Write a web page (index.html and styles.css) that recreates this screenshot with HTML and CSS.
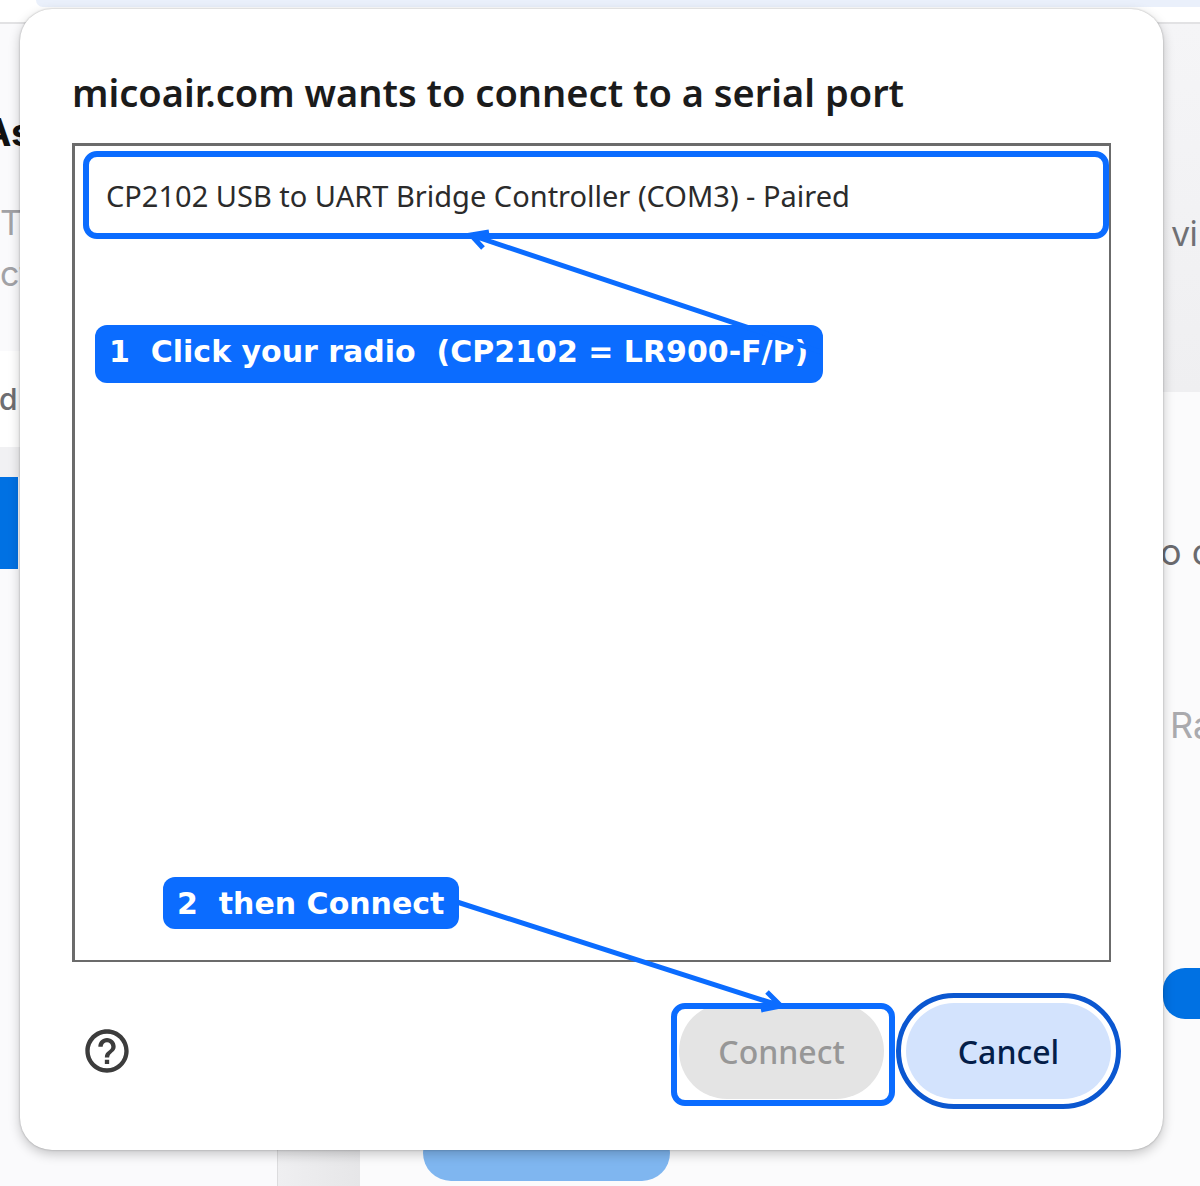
FILE: index.html
```html
<!DOCTYPE html>
<html lang="en">
  <head>
    <meta charset="UTF-8" />
    <meta name="viewport" content="width=device-width, initial-scale=1.0" />
    <title>Connect to a serial port</title>
    <link rel="stylesheet" href="styles.css" />
  </head>
  <body>
    <div class="screen">
      <!-- page behind the dialog -->
      <div class="page">
        <div class="toolbar"></div>
        <div class="columns">
          <div class="sidebar">
            <h2>As</h2>
            <p class="intro">T<br />ct</p>
            <div class="field">d</div>
            <div class="sidebar-button"></div>
          </div>
          <div class="gutter"></div>
          <div class="main">
            <div class="main-top"><p class="via">vi</p></div>
            <p class="to-connect">o c</p>
            <p class="radio">Ra</p>
            <div class="main-button"></div>
            <div class="light-button"></div>
          </div>
        </div>
      </div>

      <div class="dialog" role="dialog" aria-labelledby="title">
        <h1 id="title">micoair.com wants to connect to a serial port</h1>

        <div class="port-list">
          <button class="port" type="button">CP2102 USB to UART Bridge Controller (COM3) - Paired</button>
        </div>

        <div class="actions">
          <button class="help" type="button" aria-label="Help">
            <svg viewBox="0 0 24 24" width="52" height="52">
              <path d="M11 18h2v-2h-2v2zm1-16C6.48 2 2 6.48 2 12s4.48 10 10 10 10-4.48 10-10S17.52 2 12 2zm0 18c-4.41 0-8-3.59-8-8s3.59-8 8-8 8 3.59 8 8-3.59 8-8 8zm0-14c-2.21 0-4 1.79-4 4h2c0-1.1.9-2 2-2s2 .9 2 2c0 2-3 1.75-3 5h2c0-2.25 3-2.5 3-5 0-2.21-1.79-4-4-4z" />
            </svg>
          </button>
          <div class="connect-wrap">
            <button class="btn connect" type="button" disabled>Connect</button>
            <span class="frame"></span>
          </div>
          <button class="btn cancel" type="button">Cancel</button>
        </div>

        <!-- callouts -->
        <div class="callout callout-port">1  Click your radio  (CP2102 = LR900-F/P)</div>
        <div class="callout callout-connect">2  then Connect</div>
        <svg class="arrow arrow-port" viewBox="0 0 364 130" width="364" height="130">
          <path d="M356 123L6 6M24 3L6 6L18 19" />
        </svg>
        <svg class="arrow arrow-connect" viewBox="0 0 340 124" width="340" height="124">
          <path d="M2 5L326 109M312 95L326 109L306 113" />
        </svg>
      </div>
    </div>
  </body>
</html>
```
FILE: styles.css
```css
* {
  box-sizing: border-box;
}
body {
  margin: 0;
  font-family: "Noto Sans", "Open Sans", sans-serif;
  color: #1b1b1b;
}
h1,
h2,
p {
  margin: 0;
}
button {
  font-family: inherit;
  padding: 0;
  border: 0;
}
.screen {
  display: grid;
  min-height: 100vh;
  overflow: hidden;
}
.page,
.dialog {
  grid-area: 1 / 1;
  min-width: 0;
}

/* page behind the dialog */
.page {
  display: flex;
  flex-direction: column;
  font-family: Inter, sans-serif;
  background-color: #fff;
}
.toolbar {
  height: 24px;
  border-bottom: 2px solid #e2e2e4;
}
.toolbar::before {
  content: "";
  display: block;
  height: 7px;
  margin-left: 36px;
  background-color: #eaf0fb;
  border-radius: 0 0 0 20px;
}
.columns {
  display: flex;
  flex: 1;
}
.sidebar {
  width: 278px;
  background-color: #fafafc;
  border-right: 1px solid #dcdcde;
}
.sidebar h2 {
  margin-left: -17px;
  padding-top: 84px;
  font-size: 38px;
  line-height: 48px;
  color: #111;
}
.intro {
  padding: 41px 0 52px;
  font-size: 34px;
  line-height: 51px;
  color: #a2a2a6;
}
.field {
  margin-left: -1px;
  background-color: #fff;
  border-bottom: 30px solid #f1f1f3;
  font-size: 30px;
  font-weight: 500;
  line-height: 96px;
  color: #6e6e72;
}
.sidebar-button {
  width: 18px;
  height: 92px;
  background-color: #0071e3;
}
.gutter {
  width: 82px;
  background: linear-gradient(to right, #efeff1, #e6e6e8);
}
.main {
  display: flex;
  flex-direction: column;
  flex: 1;
  background-color: #fbfbfc;
  font-size: 36px;
  line-height: 48px;
}
.main-top {
  height: 368px;
  padding-top: 185px;
  background: linear-gradient(#f5f5f7, #efeff1);
}
.main p {
  align-self: flex-end;
  width: 40px;
  white-space: nowrap;
}
.main .via {
  margin-left: auto;
  width: 28px;
  font-family: "Noto Sans", sans-serif;
  font-size: 34px;
  color: #707074;
}
.main .to-connect {
  margin-top: 136px;
  color: #6a6a6e;
}
.main .radio {
  width: 30px;
  margin-top: 125px;
  color: #aaaaae;
}
.main-button {
  align-self: flex-end;
  width: 37px;
  height: 51px;
  margin-top: 219px;
  background-color: #0071e3;
  border-radius: 22px 0 0 22px;
}
.light-button {
  width: 247px;
  height: 56px;
  margin: 106px 0 5px 63px;
  background-color: #7fb6f0;
  border-radius: 28px;
}

/* dialog */
.dialog {
  position: relative;
  display: flex;
  flex-direction: column;
  margin: 9px 37px 36px 20px;
  padding: 57px 52px 51px;
  background-color: #fff;
  border-radius: 32px;
  box-shadow: 0 0 2px rgba(0, 0, 0, 0.3), 0 4px 12px rgba(0, 0, 0, 0.22);
}
.dialog h1 {
  margin-bottom: 25px;
  font-size: 38px;
  font-weight: 600;
  line-height: 52px;
  white-space: nowrap;
}
.port-list {
  flex: 1;
  padding: 5px 0 0 8px;
  border: 2px solid #6b6b6b;
  border-width: 3px 2px 2px 3px;
}
.port {
  display: block;
  width: 100%;
  height: 88px;
  padding: 0 17px;
  background-color: #fff;
  border: 6px solid #0b6cff;
  border-radius: 14px;
  font-size: 29px;
  font-weight: 400;
  text-align: left;
  color: #2b2b2b;
  white-space: nowrap;
}
.actions {
  display: flex;
  align-items: center;
  gap: 22px;
  padding-top: 41px;
}
.help {
  height: 52px;
  margin: 0 auto 0 9px;
  background: none;
}
.help svg {
  display: block;
  fill: #3c3c3c;
}
.btn {
  display: block;
  width: 205px;
  height: 96px;
  border-radius: 48px;
  font-size: 32px;
  font-weight: 500;
}
.connect-wrap {
  position: relative;
}
.connect {
  background-color: #e4e4e4;
  color: #979797;
}
.frame {
  position: absolute;
  inset: 0 -11px -7px -8px;
  border: 6px solid #0b6cff;
  border-radius: 14px;
}
.cancel {
  background-color: #d3e3fd;
  color: #041e49;
  outline: 5px solid #0b57d0;
  outline-offset: 5px;
}

/* callouts */
.callout {
  position: absolute;
  padding: 1px 15px 0 14px;
  background-color: #0b6cff;
  border-radius: 12px;
  font-family: "DejaVu Sans", sans-serif;
  font-size: 30px;
  font-weight: bold;
  line-height: 51px;
  color: #fff;
  white-space: pre;
}
.callout-port {
  top: 316px;
  left: 75px;
  padding-bottom: 6px;
}
.callout-connect {
  bottom: 221px;
  left: 143px;
}
.arrow {
  position: absolute;
  fill: none;
  stroke: #0b6cff;
  stroke-width: 5;
}
.arrow-port {
  top: 220px;
  left: 445px;
}
.arrow-connect {
  right: 368px;
  bottom: 129px;
}
```
